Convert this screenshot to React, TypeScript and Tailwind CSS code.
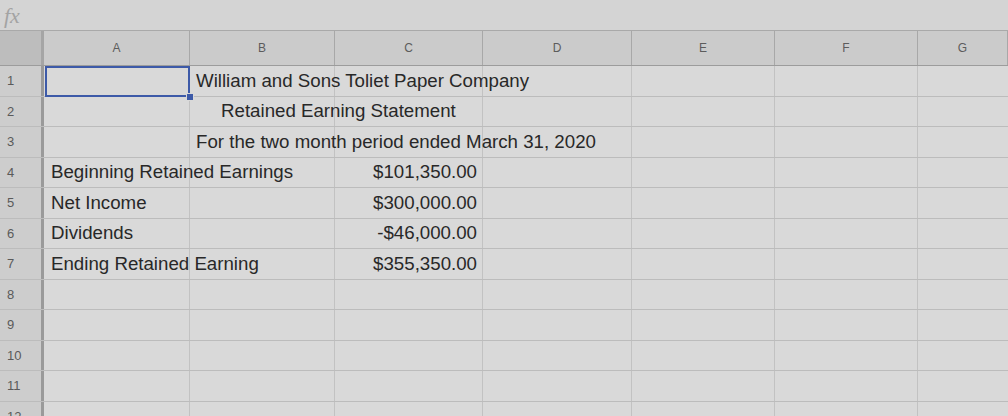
import React from 'react';

const cols = [
  { key: 'A', w: 'w-[146px]' },
  { key: 'B', w: 'w-[145px]' },
  { key: 'C', w: 'w-[148px]' },
  { key: 'D', w: 'w-[149px]' },
  { key: 'E', w: 'w-[143px]' },
  { key: 'F', w: 'w-[143px]' },
  { key: 'G', w: 'flex-1' },
];

type Row = { n: number; a?: string; b?: string; bPad?: string; c?: string };

const rows: Row[] = [
  { n: 1, b: 'William and Sons Toliet Paper Company', bPad: 'pl-[6px]' },
  { n: 2, b: 'Retained Earning Statement', bPad: 'pl-[31px]' },
  { n: 3, b: 'For the two month period ended March 31, 2020', bPad: 'pl-[6px]' },
  { n: 4, a: 'Beginning Retained Earnings', c: '$101,350.00' },
  { n: 5, a: 'Net Income', c: '$300,000.00' },
  { n: 6, a: 'Dividends', c: '-$46,000.00' },
  { n: 7, a: 'Ending Retained Earning', c: '$355,350.00' },
  { n: 8 },
  { n: 9 },
  { n: 10 },
  { n: 11 },
  { n: 12 },
];

export default function App() {
  return (
    <div className="w-[1008px] h-[416px] overflow-hidden bg-[#d9d9d9] text-[#282828] font-['Liberation_Sans',Arial,sans-serif] flex flex-col">
      {/* formula bar */}
      <div className="h-[31px] shrink-0 flex items-center border-b border-[#a9a9a9] bg-[#d4d4d4]">
        <span className="pl-[4px] text-[22px] italic text-[#a3a3a3] font-['Liberation_Serif',serif]">fx</span>
      </div>

      {/* column headers */}
      <div className="h-[35px] shrink-0 flex border-b border-[#9c9c9c] bg-[#cbcbcb]">
        <div className="w-[44px] shrink-0 bg-[#bdbdbd] border-r-[3px] border-[#a5a5a5]" />
        {cols.map((c) => (
          <div
            key={c.key}
            className={`${c.w} shrink-0 flex items-center justify-center border-r border-[#a8a8a8] text-[12px] text-[#5c5c5c]`}
          >
            {c.key}
          </div>
        ))}
      </div>

      {/* rows */}
      <div className="relative flex-1 flex flex-col">
        {rows.map((r) => (
          <div key={r.n} className="h-[30.5px] shrink-0 flex border-b border-[#bcbcbc]">
            <div className="w-[44px] shrink-0 flex items-center pl-[7px] text-[13px] text-[#5a5a5a] bg-[#cdcdcd] border-r-[3px] border-[#9a9a9a]">
              {r.n}
            </div>
            <div className="w-[146px] shrink-0 flex items-center border-r border-[#c2c2c2] pl-[7px] text-[18.7px] whitespace-nowrap overflow-visible">
              {r.a}
            </div>
            <div className={`w-[145px] shrink-0 flex items-center border-r border-[#c2c2c2] ${r.bPad ?? ''} text-[18.7px] whitespace-nowrap overflow-visible relative z-10`}>
              {r.b}
            </div>
            <div className="w-[148px] shrink-0 flex items-center justify-end border-r border-[#c2c2c2] pr-[5px] text-[18.7px] whitespace-nowrap">
              {r.c}
            </div>
            <div className="w-[149px] shrink-0 border-r border-[#c2c2c2]" />
            <div className="w-[143px] shrink-0 border-r border-[#c2c2c2]" />
            <div className="w-[143px] shrink-0 border-r border-[#c2c2c2]" />
            <div className="flex-1" />
          </div>
        ))}

        {/* selection on A1 */}
        <div className="absolute left-[45px] top-[0px] w-[145px] h-[31px] border-2 border-[#3d5aa8] pointer-events-none" />
        <div className="absolute left-[186px] top-[27px] w-[8px] h-[8px] bg-[#3d5aa8] border border-[#d9d9d9]" />
      </div>
    </div>
  );
}
